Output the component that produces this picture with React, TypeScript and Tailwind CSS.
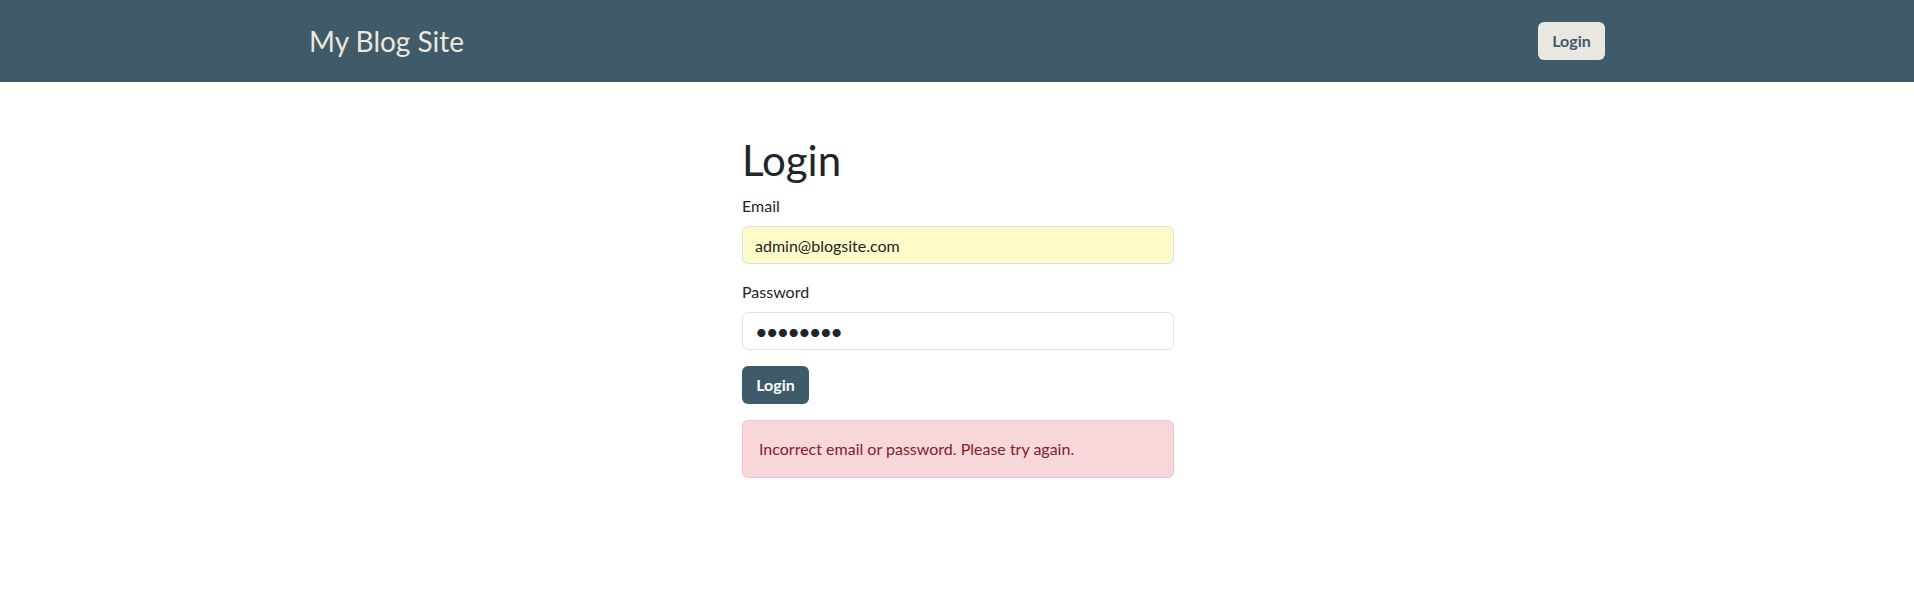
const App = () => {
  return (
    <div className="min-h-[590px] bg-white font-['Lato','Liberation_Sans',sans-serif] text-[#212529]">
      <nav className="h-[82px] bg-[#3f5b6a]">
        <div className="mx-auto flex h-full max-w-[1320px] items-center justify-between px-3">
          <span className="text-[28px] leading-none text-[#ece8dd]">My Blog Site</span>
          <button className="h-[38px] w-[67px] rounded-md bg-[#eae7e0] text-base font-bold text-[#3f5b6a]">
            Login
          </button>
        </div>
      </nav>

      <main className="mx-auto w-[432px] translate-x-px pt-[54px]">
        <h1 className="mb-[10px] text-[42px] leading-[48px]">Login</h1>

        <div className="mb-4 flex flex-col gap-2">
          <label htmlFor="email" className="text-base leading-6">
            Email
          </label>
          <input
            id="email"
            type="email"
            readOnly
            defaultValue="admin@blogsite.com"
            className="h-[38px] rounded-md border border-[#dee2e6] bg-[#fffbc8] px-3 text-base text-[#212529] outline-none"
          />
        </div>

        <div className="mb-4 flex flex-col gap-2">
          <label htmlFor="password" className="text-base leading-6">
            Password
          </label>
          <input
            id="password"
            type="password"
            readOnly
            defaultValue="password"
            className="h-[38px] rounded-md border border-[#dee2e6] bg-white px-3 text-[22px] tracking-[-2px] text-[#212529] outline-none"
          />
        </div>

        <button className="h-[38px] w-[67px] rounded-md bg-[#3f5b6a] text-base font-bold text-white">
          Login
        </button>

        <div className="mt-4 rounded-md border border-[#f5c2c7] bg-[#f8d7da] p-4 text-base leading-6 text-[#842029]">
          Incorrect email or password. Please try again.
        </div>
      </main>
    </div>
  );
};

export default App;
